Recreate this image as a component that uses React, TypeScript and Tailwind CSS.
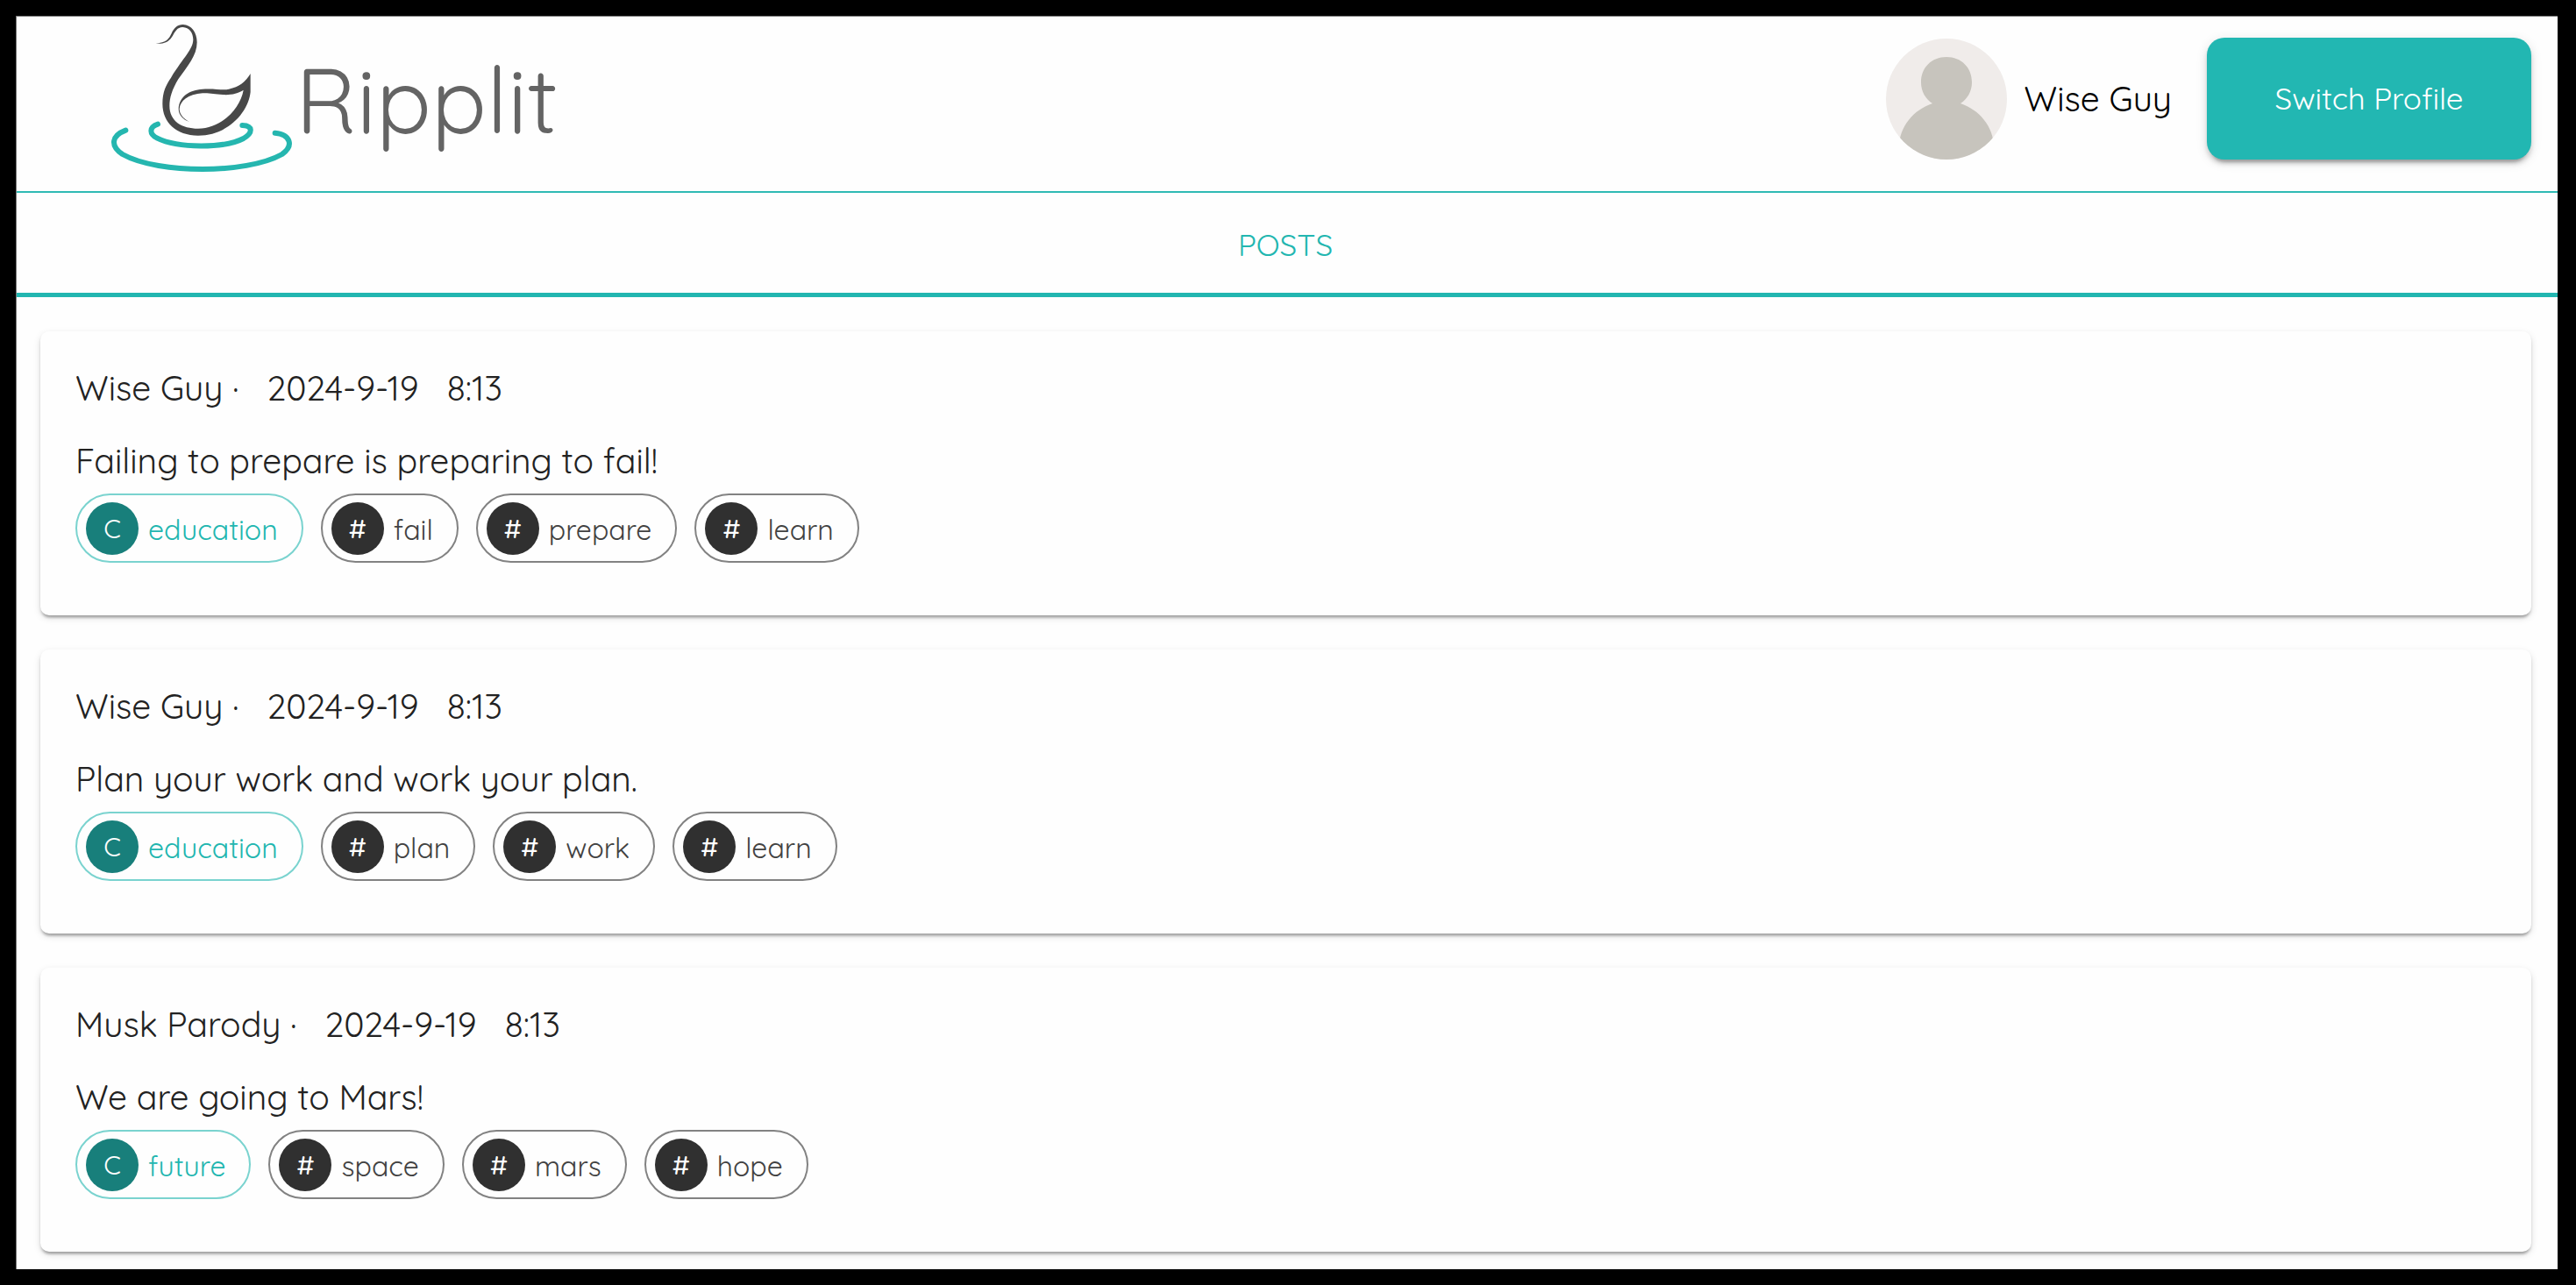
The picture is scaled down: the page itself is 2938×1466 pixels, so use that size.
type Post = { author: string; date: string; time: string; text: string; category: string; tags: string[] };

const posts: Post[] = [
  {
    author: 'Wise Guy',
    date: '2024-9-19',
    time: '8:13',
    text: 'Failing to prepare is preparing to fail!',
    category: 'education',
    tags: ['fail', 'prepare', 'learn'],
  },
  {
    author: 'Wise Guy',
    date: '2024-9-19',
    time: '8:13',
    text: 'Plan your work and work your plan.',
    category: 'education',
    tags: ['plan', 'work', 'learn'],
  },
  {
    author: 'Musk Parody',
    date: '2024-9-19',
    time: '8:13',
    text: 'We are going to Mars!',
    category: 'future',
    tags: ['space', 'mars', 'hope'],
  },
];

function SwanLogo() {
  return (
    <svg viewBox="39 39 639 531" className="h-[177px] w-[213px] shrink-0" aria-hidden="true">
      <g fill="none" stroke="#25b6af" strokeWidth="18" strokeLinecap="round">
        <path d="M207 395C178 405 176 428 205 443C275 478 435 478 500 444C534 424 532 400 496 399" />
        <path d="M97 416C50 434 42 468 86 498C150 534 260 549 360 549C460 549 570 533 632 498C674 468 660 430 608 425" />
      </g>
      <path
        fill="#484848"
        d="M293 54C322 54 341 82 341 115C341 160 308 198 277 241C256 276 247 305 247 332C247 385 290 410 345 410C425 410 490 340 500 278C482 290 455 296 430 294C400 292 385 288 360 289C310 292 283 315 281 343C281 362 296 378 314 386C292 380 278 362 278 343C280 300 315 278 360 275C400 272 430 280 450 275C485 268 508 250 524 222L524 285C518 350 450 434 345 434C270 434 223 390 223 325C223 285 235 260 252 236C295 166 327 140 328 106C328 82 314 64 293 63C274 62 266 78 258 92C249 107 238 117 215 119L200 118C236 117 245 103 254 84C262 66 274 54 293 54Z"
      />
    </svg>
  );
}

function Avatar() {
  return (
    <svg viewBox="0 0 138 138" className="size-[138px] shrink-0" role="img" aria-label="Wise Guy">
      <clipPath id="avatar-circle">
        <circle cx="69" cy="69" r="69" />
      </clipPath>
      <g clipPath="url(#avatar-circle)">
        <rect width="138" height="138" fill="#f0ecea" />
        <path
          fill="#c7c4bd"
          d="M69 21C86 21 98 33 98 50C98 60 93 69 85 74C106 81 123 100 123 124V138H15V124C15 100 32 81 53 74C45 69 40 60 40 50C40 33 52 21 69 21Z"
        />
      </g>
    </svg>
  );
}

function Chip({ mark, label, accent }: { mark: string; label: string; accent?: boolean }) {
  return (
    <li
      className={
        accent
          ? 'flex h-[79px] items-center gap-[11px] rounded-full border-2 border-[#7ad3cf] pr-[27px] pl-[10px] text-[#22b6b0]'
          : 'flex h-[79px] items-center gap-[11px] rounded-full border-2 border-[#828282] pr-[27px] pl-[10px] text-[#424242]'
      }
    >
      <span
        className={
          accent
            ? 'flex size-[60px] items-center justify-center rounded-full bg-[#187f7b] text-[30px] text-white'
            : 'flex size-[60px] items-center justify-center rounded-full bg-[#303030] text-[30px] font-medium text-white'
        }
      >
        {mark}
      </span>
      <span className="pt-0.5 text-[32px] leading-[40px]">{label}</span>
    </li>
  );
}

function PostCard({ post }: { post: Post }) {
  return (
    <article className="rounded-[10px] bg-[#fefefe] px-10 pt-10 pb-[60px] text-[39px] leading-[50px] text-[#222] shadow-[0_5px_3px_-3px_rgba(0,0,0,0.2),0_3px_3px_0_rgba(0,0,0,0.14),0_3px_8px_0_rgba(0,0,0,0.12)]">
      <header className="flex">
        <span className="mr-8">{post.author} ·</span>
        <time className="mr-8">{post.date}</time>
        <time>{post.time}</time>
      </header>
      <p className="mt-[33px]">{post.text}</p>
      <ul className="mt-3 flex flex-wrap gap-5">
        <Chip mark="C" label={post.category} accent />
        {post.tags.map((tag) => (
          <Chip key={tag} mark="#" label={tag} />
        ))}
      </ul>
    </article>
  );
}

export default function App() {
  return (
    <div className="min-h-screen bg-black pt-[18px] pr-[21px] pb-[18px] pl-[18px] font-['Quicksand','Lato',sans-serif]">
      <div className="border-t border-l border-[#777] bg-[#fefefe]">
        <header className="flex items-start justify-between border-b-2 border-[#2fbab4] pr-[30px] pb-[18px] pl-[105px]">
          <a href="#home" aria-label="Ripplit" className="flex pt-1 text-[#646464]">
            <SwanLogo />
            <span className="pt-[26px] text-[104px] leading-[128px]">Ripplit</span>
          </a>
          <div className="flex items-center pt-6">
            <Avatar />
            <span className="mr-10 ml-5 pt-0.5 text-[39px] text-black">Wise Guy</span>
            <button
              type="button"
              className="h-[139px] w-[370px] rounded-[20px] bg-[#22b7b2] text-[35px] text-white shadow-[0_8px_3px_-5px_rgba(0,0,0,0.2),0_5px_5px_0_rgba(0,0,0,0.14),0_3px_13px_0_rgba(0,0,0,0.12)]"
            >
              Switch Profile
            </button>
          </div>
        </header>
        <nav className="flex h-[119px] items-center justify-center border-b-[5px] border-[#22b6b0]">
          <a href="#posts" className="pt-1 pr-1 text-[35px] text-[#22b6b0]">
            POSTS
          </a>
        </nav>
        <main className="flex flex-col gap-[39px] pt-[39px] pr-[30px] pb-5 pl-[27px]">
          {posts.map((post, i) => (
            <PostCard key={i} post={post} />
          ))}
        </main>
      </div>
    </div>
  );
}
